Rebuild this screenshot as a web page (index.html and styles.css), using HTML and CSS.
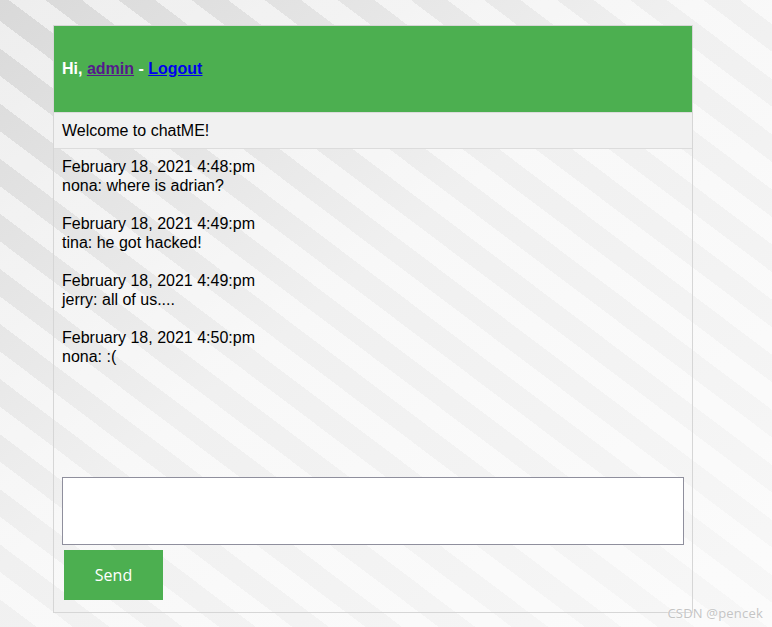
FILE: index.html
```html
<!DOCTYPE html>
<html>
<head>
<meta charset="utf-8">
<title>chatME</title>
<link rel="stylesheet" href="styles.css">
</head>
<body>
<div class="chat">
  <div class="header">
    <span>Hi, <a class="visited" href="#">admin</a> - <a class="link" href="#">Logout</a></span>
  </div>
  <div class="welcome">Welcome to chatME!</div>
  <div class="messages">
    <div class="msg"><div>February 18, 2021 4:48:pm</div><div>nona: where is adrian?</div></div>
    <div class="msg"><div>February 18, 2021 4:49:pm</div><div>tina: he got hacked!</div></div>
    <div class="msg"><div>February 18, 2021 4:49:pm</div><div>jerry: all of us....</div></div>
    <div class="msg"><div>February 18, 2021 4:50:pm</div><div>nona: :(</div></div>
  </div>
  <div class="composer">
    <textarea class="input"></textarea>
    <button class="send">Send</button>
  </div>
</div>
<div class="watermark">CSDN @pencek</div>
</body>
</html>
```

FILE: styles.css
```css
html, body {
  margin: 0;
  padding: 0;
  height: 100%;
}
body {
  font-family: "Liberation Sans", Arial, sans-serif;
  font-size: 16px;
  color: #000;
  background:
    repeating-linear-gradient(37deg, rgba(255,255,255,0) 0 22px, rgba(255,255,255,0.55) 22px 44px),
    linear-gradient(to bottom right, #d9d9d9 0%, #f0f0f0 45%, #f7f7f7 100%);
  padding-top: 25px;
  padding-left: 53px;
  box-sizing: border-box;
  overflow: hidden;
}
.chat {
  width: 638px;
  border: 1px solid #d6d6d6;
}
.header {
  height: 86px;
  background: #4caf50;
  color: #fff;
  font-weight: bold;
  display: flex;
  align-items: center;
  padding: 0 8px;
}
.header a { text-decoration: underline; }
.header .visited { color: #551a8b; }
.header .link { color: #0000ee; }
.welcome {
  background: #f1f1f1;
  border-top: 1px solid #dcdcdc;
  border-bottom: 1px solid #dcdcdc;
  padding: 8px;
  line-height: 19px;
}
.messages {
  box-sizing: border-box;
  height: 328px;
  padding: 8px;
  line-height: 19px;
}
.msg {
  margin-bottom: 19px;
}
.composer {
  padding: 0 8px 12px 8px;
}
.input {
  display: block;
  box-sizing: border-box;
  width: 622px;
  height: 68px;
  margin: 0;
  border: 1px solid #8f8f9d;
  background: #fff;
  resize: none;
  outline: none;
}
.send {
  display: block;
  margin: 5px 0 0 2px;
  width: 99px;
  height: 50px;
  border: none;
  background: #4caf50;
  color: #fff;
  font-family: "Open Sans", "Noto Sans", sans-serif;
  font-size: 16px;
  padding: 0;
}
.watermark {
  position: absolute;
  right: 9px;
  top: 604px;
  font-family: "Open Sans", "Noto Sans", sans-serif;
  font-size: 13px;
  color: #c4c4c4;
  text-shadow: 0 0 2px #fff;
  letter-spacing: 0.2px;
}
```
